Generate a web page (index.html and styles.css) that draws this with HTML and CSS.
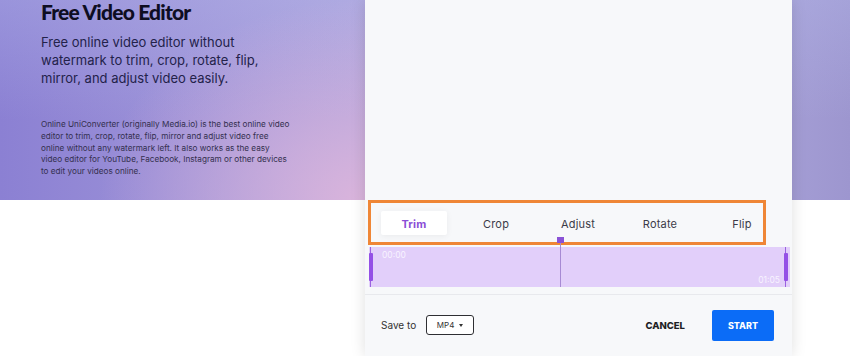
FILE: index.html
```html
<!DOCTYPE html>
<html lang="en">
<head>
    <meta charset="UTF-8">
    <meta name="viewport" content="width=device-width, initial-scale=1.0">
    <link rel="stylesheet" href="styles.css">
    <title>Free Video Editor</title>
</head>
<body>
    <div class="page">
        <section class="intro">
            <h1>Free Video Editor</h1>
            <p class="lead">Free online video editor without<br>watermark to trim, crop, rotate, flip,<br>mirror, and adjust video easily.</p>
            <p class="about">Online UniConverter (originally Media.io) is the best online video<br>editor to trim, crop, rotate, flip, mirror and adjust video free<br>online without any watermark left. It also works as the easy<br>video editor for YouTube, Facebook, Instagram or other devices<br>to edit your videos online.</p>
        </section>
        <section class="editor">
            <div class="preview"></div>
            <div class="tools">
                <ul class="tabs">
                    <li><span class="tab active">Trim</span></li>
                    <li><span class="tab">Crop</span></li>
                    <li><span class="tab">Adjust</span></li>
                    <li><span class="tab">Rotate</span></li>
                    <li><span class="tab">Flip</span></li>
                </ul>
                <span class="highlight"></span>
            </div>
            <div class="timeline">
                <span class="handle left"></span>
                <span class="handle right"></span>
                <span class="playhead"></span>
                <span class="time timeStart">00:00</span>
                <span class="time timeEnd">01:05</span>
            </div>
            <div class="actions">
                <label class="saveLabel">Save to</label>
                <button class="format">MP4 <span class="caret"></span></button>
                <span class="spacer"></span>
                <button class="cancelBtn">CANCEL</button>
                <button class="startBtn">START</button>
            </div>
        </section>
    </div>
</body>
</html>
```

FILE: styles.css
```css
html,body{margin:0;padding:0;background:#fff}
body{font-family:Inter,"Open Sans",sans-serif;color:#1b1a33;width:850px;height:356px;overflow:hidden}
.page{display:flex;height:356px;background:
    radial-gradient(ellipse 260px 200px at 360px 200px,rgba(222,182,220,.9),rgba(222,182,220,0)),
    linear-gradient(180deg,rgba(180,185,235,.35),rgba(180,185,235,0) 60%),
    linear-gradient(90deg,#8b80d3 0%,#aba1dc 40%,#cdb0da 70%,#a8a2d8 88%,#9d96cf 100%);
    background-size:100% 200px;background-repeat:no-repeat}
.intro{width:324px;padding-left:41px}
h1{margin:0;font-family:Lato,Inter,sans-serif;font-size:21px;line-height:23px;font-weight:900;letter-spacing:-0.8px;color:#0e0d22}
.lead{margin:10px 0 0;font-size:13px;line-height:18px;color:#23224a}
.about{margin:32px 0 0;font-size:8.2px;line-height:11.8px;color:#34304f}
.editor{width:427px;height:356px;display:flex;flex-direction:column;background:#f7f8fa;box-shadow:0 0 14px rgba(0,0,0,.13)}
.preview{height:200px;background:#f7f8fa}
.tools{position:relative;height:45px;padding:0 9px 0 8px}
.tabs{display:flex;list-style:none;margin:0;padding:0;height:45px}
.tabs li{flex:1;display:flex;align-items:center;justify-content:center}
.tab{font-size:11px;color:#3b3b48;letter-spacing:.2px;padding-top:2px}
.tab.active{width:66px;height:24px;padding:2px 0 0;box-sizing:border-box;display:flex;align-items:center;justify-content:center;background:#fff;border-radius:2px;box-shadow:0 1px 6px rgba(0,0,0,.06);color:#8a4fd6;font-weight:700}
.highlight{position:absolute;left:3px;top:0;width:398px;height:45px;box-sizing:border-box;border:3px solid #ef8636}
.timeline{position:relative;height:40px;margin:2px 2px 0 4px;background:#e2cffa}
.handle{position:absolute;top:0;bottom:0;width:1px;background:#9a62e0}
.handle::before{content:"";position:absolute;top:6px;height:28px;width:4px;left:-1px;background:#9450e6;border-radius:1px}
.handle.left{left:1px}
.handle.right{right:4px}
.playhead{position:absolute;left:191px;top:-4px;bottom:0;width:1px;background:#a78ad4}
.playhead::before{content:"";position:absolute;top:-6px;left:-3px;width:7px;height:6px;background:#8a52d6}
.time{position:absolute;font-size:8.5px;color:#f8f3ff}
.timeStart{left:13px;top:3px}
.timeEnd{right:10px;bottom:2px}
.actions{display:flex;align-items:center;height:60px;margin-top:7px;border-top:1px solid #e8e9ed;padding:0 18px 0 16px}
.saveLabel{font-size:10px;color:#333}
.format{margin-left:10px;width:48px;height:20px;border:1px solid #2f2f33;border-radius:3px;background:#fff;font-family:inherit;font-size:8px;color:#333;display:flex;align-items:center;justify-content:center;gap:5px;padding:0}
.caret{width:0;height:0;border-left:2.5px solid transparent;border-right:2.5px solid transparent;border-top:3px solid #333}
.spacer{flex:1}
.cancelBtn{border:none;background:none;font-family:inherit;font-size:9.5px;font-weight:800;color:#1e1e24;padding:0;margin-right:27px}
.startBtn{width:62px;height:31px;border:none;border-radius:2px;background:#0b6cf7;color:#fff;font-family:inherit;font-size:9px;font-weight:800;padding:0}
```
